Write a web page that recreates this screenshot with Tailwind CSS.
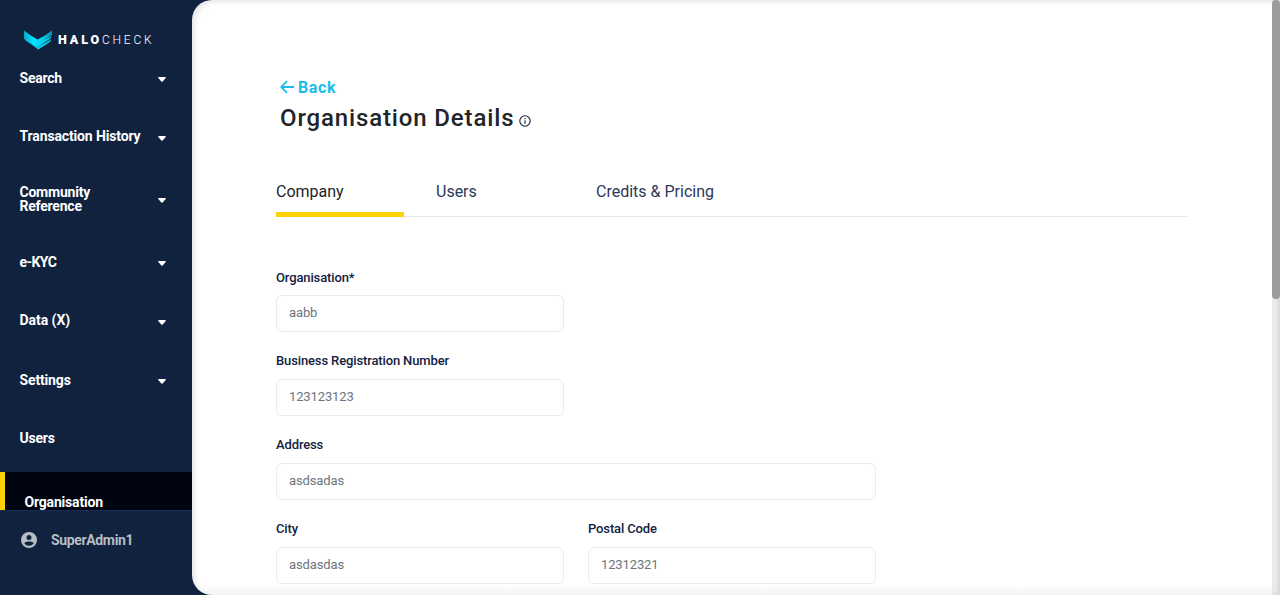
<!DOCTYPE html>
<html lang="en">
<head>
<meta charset="utf-8">
<title>HaloCheck - Organisation Details</title>
<script src="https://cdn.jsdelivr.net/npm/@tailwindcss/browser@4"></script>
</head>
<body class="h-[595px] overflow-hidden bg-[#11223f] font-['Roboto',sans-serif]">
<svg class="hidden"><symbol id="caret" viewBox="0 0 8 5"><path d="M.7 0h6.6q.9.2.4 1L4.600 4.500q-.6.5-1.200 0L.3 1Q-.2.2.7 0z" fill="#fff"/></symbol></svg>
<div class="flex h-full">
  <aside class="flex w-48 shrink-0 flex-col text-[14px] leading-[14px] font-bold tracking-[-0.220px] text-white">
    <div class="flex h-[49px] shrink-0 items-center pt-[30px] pl-6">
      <svg class="h-5 w-7 shrink-0" viewBox="0 0 28 20">
        <defs><linearGradient id="wing" x1="0" y1="0" x2="1" y2="0"><stop offset="0" stop-color="#08a9c9"/><stop offset=".35" stop-color="#03e3ff"/><stop offset=".65" stop-color="#06cfeb"/><stop offset="1" stop-color="#0b8fb0"/></linearGradient></defs>
        <path d="M0 .5Q6 5.500 13.500 9.500 21 6 28 .5v4.200Q26 7 11.500 15.200L10.500 15.700 1.500 10.500Q0 9 0 7z" fill="url(#wing)"/>
        <path d="M1 9.800 10.500 15.300 27.800 6.300Q27.500 8 25 9.600L11.800 17.400z" fill="#04dcf8"/>
        <path d="M11.500 17.200 27.300 9.600Q26.800 11.700 24.500 13L14 19.700z" fill="#09c6e2"/>
      </svg>
      <div class="flex items-baseline pl-1.5 text-[12px] tracking-[2.750px]"><span class="text-[12.500px] font-black tracking-[2.900px]">HALO</span><span class="font-light">CHECK</span></div>
    </div>
    <nav class="flex h-[461px] shrink-0 flex-col overflow-hidden">
      <div class="flex h-[58px] shrink-0 items-center justify-between pr-[26px] pl-[19.500px]"><span>Search</span><svg class="mt-0.5 h-[5px] w-2"><use href="#caret"/></svg></div>
      <div class="flex h-[58px] shrink-0 items-center justify-between pr-[26px] pl-[19.500px]"><span class="tracking-[-0.140px]">Transaction History</span><svg class="mt-1 h-[5px] w-2"><use href="#caret"/></svg></div>
      <div class="flex h-[68px] shrink-0 items-center justify-between pr-[26px] pl-[19.500px]"><span>Community<br>Reference</span><svg class="mt-0.5 h-[5px] w-2"><use href="#caret"/></svg></div>
      <div class="flex h-[58px] shrink-0 items-center justify-between pr-[26px] pl-[19.500px]"><span class="tracking-[-0.550px]">e-KYC</span><svg class="mt-0.5 h-[5px] w-2"><use href="#caret"/></svg></div>
      <div class="flex h-[58px] shrink-0 items-center justify-between pr-[26px] pl-[19.500px]"><span class="tracking-[-0.050px]">Data (X)</span><svg class="mt-1 h-[5px] w-2"><use href="#caret"/></svg></div>
      <div class="flex h-[62px] shrink-0 items-center justify-between pr-[26px] pl-[19.500px]"><span class="tracking-[-0.150px]">Settings</span><svg class="mt-0.5 h-[5px] w-2"><use href="#caret"/></svg></div>
      <div class="flex h-[54px] shrink-0 items-center pl-[19.500px]">Users</div>
      <div class="mt-[7px] h-[60px] shrink-0 border-l-[5px] border-[#fdd306] bg-[#00050f] pt-[23px] pl-[19.500px] tracking-[-0.180px]">Organisation</div>
    </nav>
    <div class="flex h-[85px] items-start border-t border-[#172e5c] pt-[21px] pl-[21px] text-[#b8bdc5]">
      <svg class="h-4 w-4" viewBox="0 0 16 16"><path fill="#b8bdc5" fill-rule="evenodd" d="M8 0a8 8 0 1 0 0 16A8 8 0 0 0 8 0zm0 3a2.500 2.500 0 1 1 0 5 2.500 2.500 0 0 1 0-5zM3.200 11.300C4.300 9.900 6.600 9.600 8 9.600s3.700.3 4.800 1.700a5.800 5.800 0 0 1-9.600 0z"/></svg>
      <span class="pt-px pl-3.5 tracking-[-0.350px]">SuperAdmin1</span>
    </div>
  </aside>
  <main class="flex-1 rounded-l-[20px] bg-white shadow-[inset_4px_3px_7px_-3px_rgba(18,34,63,0.16)]">
    <div class="pt-[78px] pl-[84px]">
      <a class="flex h-5 items-center pl-1 text-[16px] font-bold tracking-[0.600px] text-[#19bdea]">
        <svg class="mr-1 mb-0.5 h-3.5 w-3.5" viewBox="0 0 14 14" fill="none" stroke="currentColor" stroke-width="1.800"><path d="M14 7H1.500M7 1.200 1.200 7l5.800 5.800"/></svg>Back</a>
      <div class="flex h-10 items-center pl-1 text-[24px] tracking-[0.860px] text-[#212529]">
        <h1 class="font-medium">Organisation Details</h1>
        <svg class="mt-[6px] ml-[5px] h-3 w-3" viewBox="0 0 12 12" fill="none" stroke="#12223f" stroke-width="1.100"><circle cx="6" cy="6" r="5.200"/><path d="M6 5.200v3.600M6 3.100v1.200"/></svg>
      </div>
      <div class="mt-[34px] flex h-[45px] w-[912px] gap-8 border-b border-[#e7e8ea] text-[16px] leading-[39px] text-[#2a3957]">
        <div class="h-[45px] w-32 border-b-[5px] border-[#fdd306] text-[#212529]">Company</div>
        <div class="w-32">Users</div>
        <div>Credits &amp; Pricing</div>
      </div>
      <form class="flex w-[600px] flex-col pt-[52px] text-[13px] tracking-[-0.130px]">
        <label class="h-[84px] w-72 font-medium text-[#12223f]"><span class="block h-[26px] leading-[18px]">Organisation*</span><span class="block h-[37px] rounded-md border border-[#e9eaec] pl-3 leading-[34px] font-normal text-[#6c757d]">aabb</span></label>
        <label class="h-[84px] w-72 font-medium text-[#12223f]"><span class="block h-[26px] leading-[16px]">Business Registration Number</span><span class="block h-[37px] rounded-md border border-[#e9eaec] pl-3 leading-[34px] font-normal text-[#6c757d]">123123123</span></label>
        <label class="h-[84px] font-medium text-[#12223f]"><span class="block h-[25.500px] leading-[16px]">Address</span><span class="block h-[37px] rounded-md border border-[#ececee] pl-3 leading-[34px] font-normal text-[#6c757d]">asdsadas</span></label>
        <div class="flex gap-6">
          <label class="w-72 font-medium text-[#12223f]"><span class="block h-[25.500px] leading-[16px]">City</span><span class="block h-[37px] rounded-md border border-[#ececee] pl-3 leading-[34px] font-normal text-[#6c757d]">asdasdas</span></label>
          <label class="w-72 font-medium text-[#12223f]"><span class="block h-[25.500px] leading-[16px]">Postal Code</span><span class="block h-[37px] rounded-md border border-[#ececee] pl-3 leading-[34px] font-normal text-[#6c757d]">12312321</span></label>
        </div>
      </form>
    </div>
    <div class="h-[11px] rounded-bl-[20px] bg-linear-to-b from-transparent to-[#12223f]/5"></div>
  </main>
  <div class="w-2 shrink-0 bg-[#ececec] shadow-[inset_-2px_0_4px_#d4d4d4]"><div class="h-[299px] rounded bg-[#9b9b9b]"></div></div>
</div>
</body>
</html>
